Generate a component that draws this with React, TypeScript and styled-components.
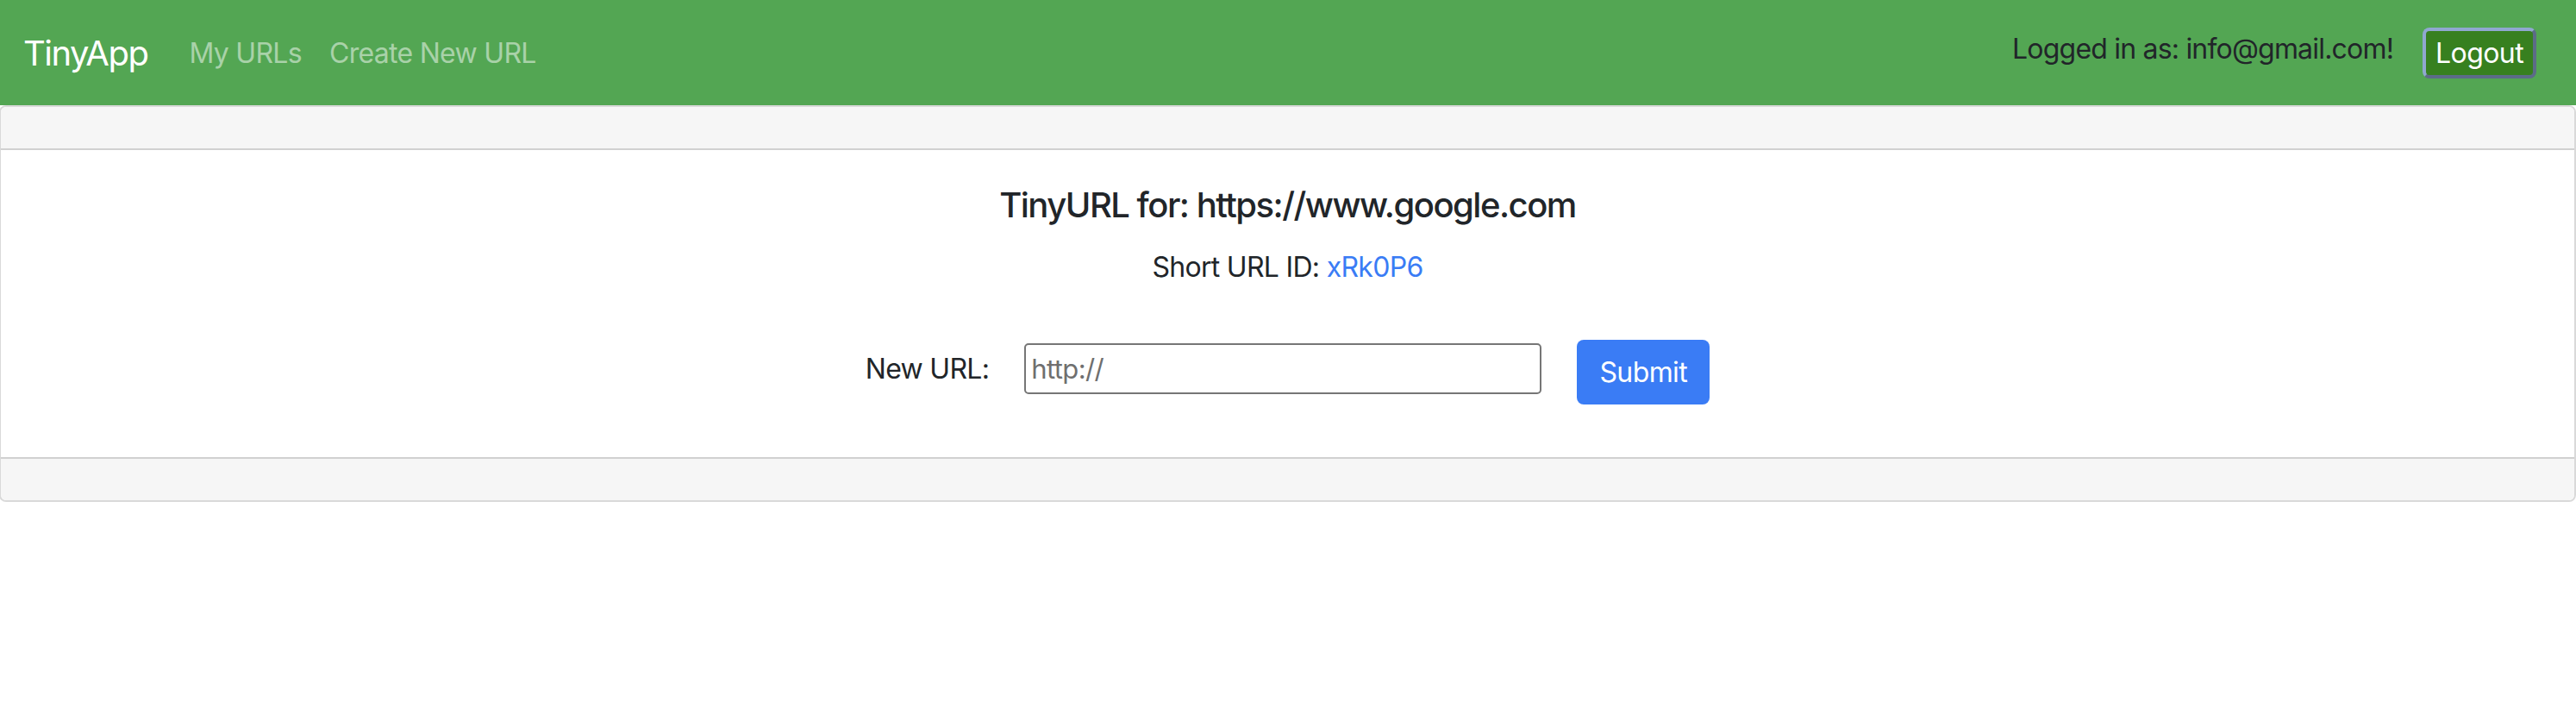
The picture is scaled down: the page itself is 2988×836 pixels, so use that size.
import React from "react";
import styled, { createGlobalStyle } from "styled-components";

const GlobalStyle = createGlobalStyle`
  body {
    margin: 0;
    background: #ffffff;
    font-family: Inter, "Noto Sans", "Liberation Sans", sans-serif;
    color: #212529;
  }
  * {
    box-sizing: border-box;
  }
`;

const Navbar = styled.nav`
  display: flex;
  align-items: center;
  justify-content: space-between;
  height: 122px;
  padding: 0 46px 0 27px;
  background: #53a653;
`;

const NavLeft = styled.div`
  display: flex;
  align-items: center;
`;

const Brand = styled.a`
  margin-right: 32px;
  font-size: 40px;
  color: #ffffff;
  text-decoration: none;
  letter-spacing: -1.5px;
`;

const NavLink = styled.a`
  padding: 0 16px;
  font-size: 32px;
  color: rgba(255, 255, 255, 0.5);
  text-decoration: none;
  letter-spacing: -0.7px;
`;

const UserArea = styled.div`
  display: flex;
  align-items: center;
  gap: 34px;
`;

const LoggedText = styled.span`
  font-size: 32px;
  color: #212529;
  letter-spacing: -0.8px;
  margin-bottom: 10px;
`;

const LogoutButton = styled.button`
  height: 59px;
  padding: 0 11px;
  font-family: inherit;
  font-size: 32px;
  color: #ffffff;
  background: #37801f;
  border: 4px solid;
  border-color: #90a8d0 #5c6b88 #5c6b88 #90a8d0;
  border-radius: 8px;
  letter-spacing: -0.6px;
`;

const Card = styled.section`
  display: flex;
  flex-direction: column;
  margin-left: -1px;
  border: 2px solid rgba(0, 0, 0, 0.15);
  border-radius: 8px;
  overflow: hidden;
`;

const CardHeader = styled.div`
  height: 50px;
  background: #f6f6f6;
  border-bottom: 2px solid rgba(0, 0, 0, 0.15);
`;

const CardFooter = styled.div`
  height: 50px;
  background: #f6f6f6;
  border-top: 2px solid rgba(0, 0, 0, 0.15);
`;

const CardBody = styled.div`
  display: flex;
  flex-direction: column;
  align-items: center;
  padding: 40px;
  height: 356px;
`;

const CardTitle = styled.h5`
  margin: 0 0 24px;
  font-size: 40px;
  font-weight: 500;
  line-height: 48px;
  letter-spacing: -1.5px;
`;

const CardText = styled.p`
  margin: 0;
  font-size: 32px;
  line-height: 48px;
  letter-spacing: -0.7px;
`;

const ShortLink = styled.a`
  color: #3a7cf5;
  text-decoration: none;
`;

const UrlForm = styled.form`
  display: flex;
  align-items: center;
  justify-content: center;
  gap: 41px;
  margin-top: 52px;
`;

const FormLabel = styled.label`
  font-size: 32px;
  letter-spacing: -0.7px;
`;

const UrlInput = styled.input`
  width: 600px;
  height: 59px;
  padding: 2px 6px;
  font-family: inherit;
  font-size: 31px;
  color: #212529;
  border: 2px solid #767676;
  border-radius: 5px;
  outline: none;
  letter-spacing: -0.6px;

  &::placeholder {
    color: #6f6f6f;
  }
`;

const SubmitButton = styled.button`
  width: 154px;
  height: 75px;
  margin-top: 8px;
  font-family: inherit;
  font-size: 32px;
  color: #ffffff;
  background: #3a7cf5;
  border: none;
  border-radius: 8px;
  letter-spacing: -0.6px;
`;

export default function App() {
  return (
    <>
      <GlobalStyle />
      <Navbar>
        <NavLeft>
          <Brand href="#">TinyApp</Brand>
          <NavLink href="#">My URLs</NavLink>
          <NavLink href="#">Create New URL</NavLink>
        </NavLeft>
        <UserArea>
          <LoggedText>Logged in as: info@gmail.com!</LoggedText>
          <LogoutButton type="button">Logout</LogoutButton>
        </UserArea>
      </Navbar>
      <Card>
        <CardHeader />
        <CardBody>
          <CardTitle>TinyURL for: https://www.google.com</CardTitle>
          <CardText>
            Short URL ID: <ShortLink href="#">xRk0P6</ShortLink>
          </CardText>
          <UrlForm onSubmit={e => e.preventDefault()}>
            <FormLabel htmlFor="newURL">New URL:</FormLabel>
            <UrlInput id="newURL" type="text" placeholder="http://" />
            <SubmitButton type="submit">Submit</SubmitButton>
          </UrlForm>
        </CardBody>
        <CardFooter />
      </Card>
    </>
  );
}
